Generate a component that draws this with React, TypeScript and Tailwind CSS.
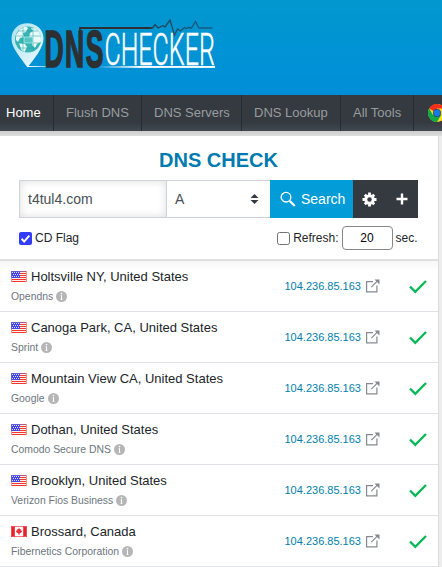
import React from 'react';

const rows = [
  { place: 'Holtsville NY, United States', provider: 'Opendns', flag: 'us' },
  { place: 'Canoga Park, CA, United States', provider: 'Sprint', flag: 'us' },
  { place: 'Mountain View CA, United States', provider: 'Google', flag: 'us' },
  { place: 'Dothan, United States', provider: 'Comodo Secure DNS', flag: 'us' },
  { place: 'Brooklyn, United States', provider: 'Verizon Fios Business', flag: 'us' },
  { place: 'Brossard, Canada', provider: 'Fibernetics Corporation', flag: 'ca' },
];

function Logo() {
  return (
    <svg width="216" height="66" viewBox="10 15 216 66" className="block overflow-visible">
      <defs>
        <linearGradient id="pin" x1="0" y1="0" x2="1" y2="1">
          <stop offset="0" stopColor="#a8e2ee" />
          <stop offset="1" stopColor="#f0fbff" />
        </linearGradient>
        <linearGradient id="line" gradientUnits="userSpaceOnUse" x1="100" x2="215" y1="0" y2="0">
          <stop offset="0" stopColor="#fff" stopOpacity="0.1" />
          <stop offset="0.35" stopColor="#fff" />
        </linearGradient>
        <linearGradient id="tail" gradientUnits="userSpaceOnUse" x1="28" x2="46" y1="0" y2="0">
          <stop offset="0" stopColor="#fff" />
          <stop offset="1" stopColor="#7fcdf0" />
        </linearGradient>
        <linearGradient id="pulse" gradientUnits="userSpaceOnUse" x1="150" x2="213" y1="0" y2="0">
          <stop offset="0" stopColor="#27414f" />
          <stop offset="1" stopColor="#185f87" />
        </linearGradient>
        <clipPath id="globe"><circle cx="28" cy="39.5" r="13" /></clipPath>
      </defs>
      <path d="M11.5 39C11.5 29 18.5 23.2 27.5 23.2S43.5 29.5 43.5 38.5C43.5 48 34 59 27.5 67.5C21 58 11.5 48 11.5 39Z" fill="url(#pin)" />
      <circle cx="28" cy="39.5" r="13" fill="#36b5b5" />
      <g clipPath="url(#globe)">
        <path d="M16 35l4-6 5-3 3 2-2 4-3 1 1 4-4 1-2 4-2-2zM19 43l6 1 2 3-3 6-3-4zM31 28l5-1 5 6v9l-4 2-2 4-3-3 1-5-4-2 1-5 3-2z" fill="#e9fafa" />
        <path d="M15 36h26M15 43h26M23 27v26M33 27v26M18 31h20M18 48h20" stroke="#279ca3" strokeWidth=".5" />
        <rect x="24" y="37" width="9" height="6" fill="#55c6c2" stroke="#d4f5f3" strokeWidth=".6" />
      </g>
      <rect x="28" y="66" width="18" height="1" fill="url(#tail)" />
      <rect x="100" y="66" width="115" height="1.9" fill="url(#line)" />
      <text transform="translate(44.4 67) scale(.52 1)" fontSize="51" letterSpacing="3" fontWeight="700" fill="#2d3033" stroke="#2d3033" strokeWidth="1.3" vectorEffect="non-scaling-stroke" fontFamily="Liberation Sans, sans-serif">DNS</text>
      <text transform="translate(104.4 64.5) scale(.48 1)" textLength="230" lengthAdjust="spacingAndGlyphs" fontSize="45" fontWeight="300" fill="#fff" stroke="#fff" strokeWidth=".4" vectorEffect="non-scaling-stroke" fontFamily="Roboto, Lato, sans-serif">CHECKER</text>
      <path d="M80 48V28H152" fill="none" stroke="#2d3033" strokeWidth="1.8" />
      <path d="M150 28h2.500l2.500-3.500 3 3.500 5-2.500 2 1.500 5-7 4.500 15 3-6 3 2 4-3.500 2 1 2-1 3 .5 4-6.500 3.500 6.500h13.500" fill="none" stroke="url(#pulse)" strokeWidth="1.300" />
    </svg>
  );
}

function Flag({ kind }: { kind: string }) {
  if (kind === 'ca') {
    return (
      <svg width="16" height="11" viewBox="0 0 16 11" className="block">
        <path fill="#e71b28" d="M0 0h16v11H0z" />
        <path fill="#fff" d="M4 .6h8v9.8H4z" />
        <path fill="#f02c36" d="M8 1.8l1 1.6 1-.5-.2 1.9 1.4-.3-.4 1.6L8.4 7.7V9h-.8V7.7L5.2 6.1l-.4-1.6 1.4.3L6 2.9l1 .5z" />
        <path d="M.5.5h2.800v10H.5zM12.700.5h2.800v10h-2.800z" fill="none" stroke="#f7797e" strokeWidth=".6" />
      </svg>
    );
  }
  return (
    <svg width="16" height="11" viewBox="0 0 16 11" className="block" shapeRendering="crispEdges">
      <path fill="#fff2ec" d="M0 0h16v11H0z" />
      <path d="M0 .5h16M0 2.500h16M0 4.500h16M0 6.500h16M0 8.500h16M0 10.500h16" stroke="#f23831" />
      <path fill="#4545e6" d="M0 0h9v7H0z" />
      <path d="M1 1.500h8M2 3.500h7M1 5.500h8" stroke="#d8d8ff" strokeDasharray="1 1" />
      <path d="M.5 7V.5H16" fill="none" stroke="#7472cb" strokeOpacity=".55" />
      <path d="M15.500 0v11M.5 7v4" stroke="#f79385" />
    </svg>
  );
}

function Info() {
  return (
    <svg width="11" height="11" viewBox="0 0 11 11" className="block shrink-0">
      <circle cx="5.500" cy="5.500" r="5.500" fill="#b6b6b6" />
      <path d="M5.500 4.300v4.200M4.700 4.700h.8M4.600 8.300h1.800" stroke="#fff" strokeWidth="1" />
      <circle cx="5.500" cy="2.600" r=".8" fill="#fff" />
    </svg>
  );
}

function Chrome() {
  return (
    <svg width="18" height="18" viewBox="0 0 18 18" className="block shrink-0">
      <circle cx="9" cy="9" r="9" fill="#fbd91b" />
      <path d="M9 9L1.200 4.500A9 9 0 0 1 16.800 4.500H9z" fill="#f52d1b" />
      <path d="M1.200 4.500A9 9 0 0 0 9 18L13 11.200 9 9 5.100 11.200z" fill="#14a84b" />
      <circle cx="9" cy="9" r="3.900" fill="#26384a" />
      <circle cx="9" cy="9" r="3.400" fill="#147be5" />
    </svg>
  );
}

const navItem = 'flex h-full shrink-0 items-center border-r border-[#272c31] text-[13px]';

export default function App() {
  return (
    <div className="h-[567px] w-[442px] overflow-hidden bg-[#ededee] font-['Liberation_Sans',Arial,sans-serif] text-[#212529]">
      <header className="h-[95px] bg-linear-to-b from-[#0298cf] to-[#018ed8] pt-[15px] pl-[10px]">
        <Logo />
      </header>
      <nav className="flex h-9 overflow-hidden bg-linear-to-b from-[#343a40] from-75% to-[#424850] text-[#999c9f]">
        <div className={navItem + ' w-[54px] pl-[6px] text-white'}>Home</div>
        <div className={navItem + ' w-[88px] pl-3'}>Flush DNS</div>
        <div className={navItem + ' w-[100px] pl-3'}>DNS Servers</div>
        <div className={navItem + ' w-[99px] pl-3'}>DNS Lookup</div>
        <div className={navItem + ' w-[73px] pl-3'}>All Tools</div>
        <div className="flex h-full shrink-0 items-center pb-px pl-[14px]"><Chrome /></div>
      </nav>
      <div className="h-[5px] bg-linear-to-b from-[#cdcdcd] to-[#dedede]" />
      <main className="w-[439px] border-r border-[#dcdcde] bg-white">
        <section className="h-[125px] border-b-2 border-[#dfdfe0] pr-5 pl-[19px]">
          <h1 className="h-11 pt-[9px] text-center text-[20px] leading-[30px] font-bold text-[#007bb0]">DNS CHECK</h1>
          <div className="flex h-[38px] text-[14px] text-[#495057]">
            <div className="flex w-[148px] items-center border border-[#ced4da] pl-2 shadow-[inset_0_0_8px_#ddd]">t4tul4.com</div>
            <div className="flex w-[103px] items-center justify-between border-y border-[#ced4da] pr-[11px] pl-2">
              A
              <svg width="9" height="10" viewBox="0 0 9 10"><path d="M4.500 0L8.500 4H.5zM4.500 10L.5 6h8z" fill="#343a40" /></svg>
            </div>
            <div className="flex w-[83px] items-center gap-[5px] bg-[#029cd8] pl-[10px] text-white">
              <svg width="16" height="16" viewBox="0 0 16 16" fill="none" stroke="#fff"><circle cx="6" cy="6.200" r="4.800" strokeWidth="1.400" /><path d="M9.800 10l5 5" strokeWidth="2.200" /></svg>
              Search
            </div>
            <div className="flex w-[65px] items-center gap-[19px] bg-[#343a40] pl-[9px]">
              <svg width="15" height="15" viewBox="0 0 15 15"><g stroke="#fff" strokeWidth="2.800"><path d="M7.500.5v14M.5 7.500h14M2.800 2.800l9.400 9.400M12.200 2.800l-9.400 9.400" /></g><circle cx="7.500" cy="7.500" r="5.200" fill="#fff" /><circle cx="7.500" cy="7.500" r="2.200" fill="#343a40" /></svg>
              <svg width="12" height="12" viewBox="0 0 12 12"><path d="M6 .5v11M.5 6h11" stroke="#fff" strokeWidth="2.400" /></svg>
            </div>
          </div>
          <div className="flex h-10 items-center text-[12px]">
            <svg width="13" height="13" viewBox="0 0 13 13"><rect width="13" height="13" rx="2" fill="#333dff" /><path d="M2.600 6.800l2.600 2.800 5.100-6" fill="none" stroke="#fff" strokeWidth="2" /></svg>
            <span className="ml-[3px]">CD Flag</span>
            <span className="ml-auto size-[13px] rounded-[2.5px] border border-[#707276]" />
            <span className="ml-[3px]">Refresh:</span>
            <span className="ml-[3px] flex h-6 w-[51px] items-center justify-center rounded-[4px] border border-[#85878a] text-[12px] text-black">20</span>
            <span className="ml-[3px] w-[22.5px] whitespace-nowrap">sec.</span>
          </div>
        </section>
        {rows.map((row, i) => (
          <section key={row.place} className={'flex h-[51px] border-b border-[#dee2e6] pl-[11px] ' + (i === 0 ? 'bg-linear-to-b from-[#f6f6f6] to-white to-20%' : '')}>
            <div className="w-[273.5px] shrink-0 pt-[5px]">
              <div className="flex h-5 items-center gap-1 text-[13px] whitespace-nowrap"><Flag kind={row.flag} /><span className="pt-[2px]">{row.place}</span></div>
              <div className="flex h-5 items-center gap-[3px] text-[10.4px] text-[#6c757d]"><span className="pt-[2px]">{row.provider}</span><Info /></div>
            </div>
            <div className="flex h-[50px] w-[96px] shrink-0 items-center text-[11px] text-[#007fae]">
              <span className="w-[81.5px]">104.236.85.163</span>
              <svg width="14" height="14" viewBox="0 0 14 14" fill="none" stroke="#868a90" strokeWidth="1.200"><path d="M7 2.600H.6v10.300h10.300V6.500M5.300 8.200l7-7" /><path d="M8.500 .5h5v5z" fill="#868a90" stroke="none" /></svg>
            </div>
            <svg width="18" height="14" viewBox="0 0 18 14" className="mt-[19px] ml-[28px]"><path d="M1 6.500l5.300 5.400L17 1" fill="none" stroke="#05b957" strokeWidth="2.300" /></svg>
          </section>
        ))}
      </main>
    </div>
  );
}
